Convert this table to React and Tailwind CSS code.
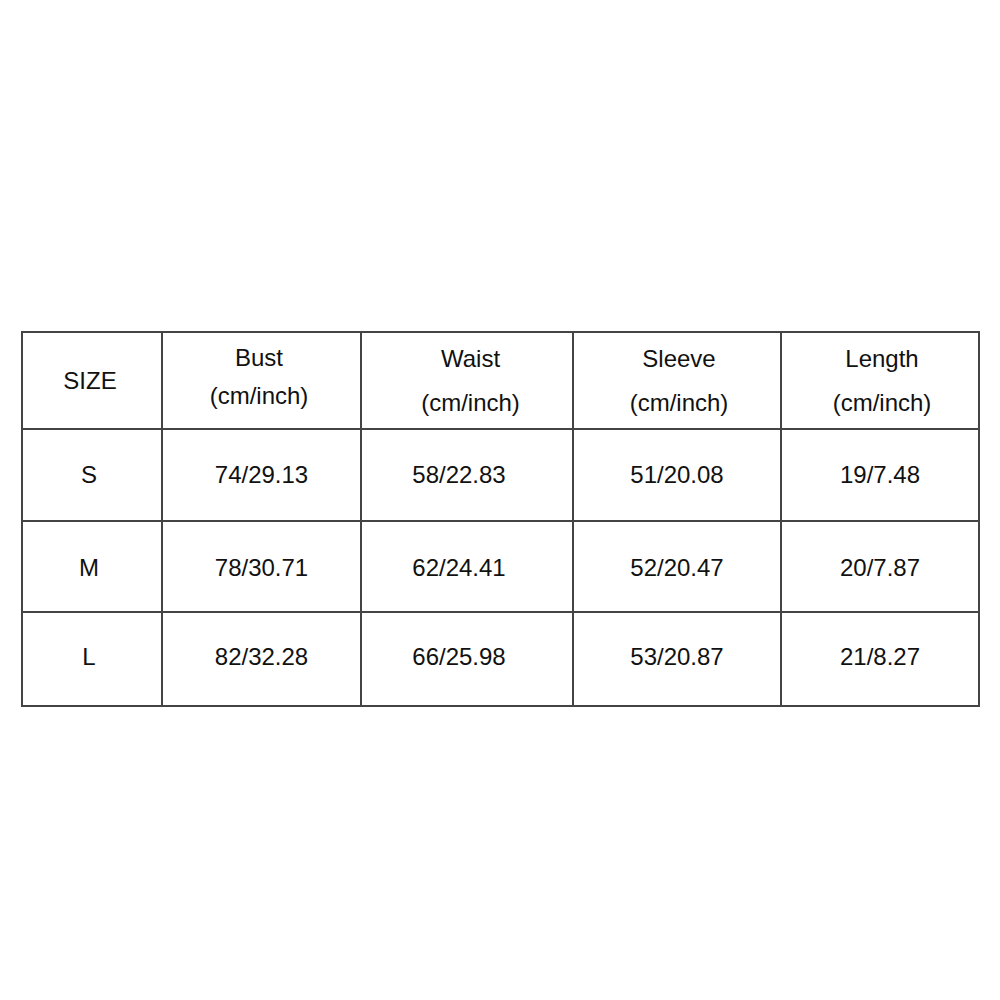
const rows = [
  { size: "S", bust: "74/29.13", waist: "58/22.83", sleeve: "51/20.08", length: "19/7.48", h: "h-[92px]", pad: "pt-0" },
  { size: "M", bust: "78/30.71", waist: "62/24.41", sleeve: "52/20.47", length: "20/7.87", h: "h-[91px]", pad: "pt-[3px]" },
  { size: "L", bust: "82/32.28", waist: "66/25.98", sleeve: "53/20.87", length: "21/8.27", h: "h-[94px]", pad: "pb-[4px]" },
];

const cell = "flex items-center justify-center border-r-2 border-b-2 border-[#444]";

const App = () => {
  return (
    <div
      className="min-h-screen bg-white pt-[331px] pl-[21px] text-[24px] text-[#111]"
      style={{ fontFamily: '"Liberation Sans", Arial, sans-serif' }}
    >
      <div className="grid w-[959px] grid-cols-[140px_199px_212px_208px_198px] border-l-2 border-t-2 border-[#444]">
        {/* header */}
        <div className={`${cell} h-[97px] pr-[4px]`}>SIZE</div>
        <div className={`${cell} h-[97px] flex-col pr-[5px] pb-[8px] leading-[38px]`}>
          <span>Bust</span>
          <span>(cm/inch)</span>
        </div>
        <div className={`${cell} h-[97px] flex-col pl-[7px] leading-[44px]`}>
          <span>Waist</span>
          <span>(cm/inch)</span>
        </div>
        <div className={`${cell} h-[97px] flex-col pl-[4px] leading-[44px]`}>
          <span>Sleeve</span>
          <span>(cm/inch)</span>
        </div>
        <div className={`${cell} h-[97px] flex-col pl-[4px] leading-[44px]`}>
          <span>Length</span>
          <span>(cm/inch)</span>
        </div>

        {rows.map((r) => (
          <div key={r.size} className="contents">
            <div className={`${cell} ${r.h} ${r.pad} pr-[6px]`}>{r.size}</div>
            <div className={`${cell} ${r.h} ${r.pad}`}>{r.bust}</div>
            <div className={`${cell} ${r.h} ${r.pad} pr-[16px]`}>{r.waist}</div>
            <div className={`${cell} ${r.h} ${r.pad}`}>{r.sleeve}</div>
            <div className={`${cell} ${r.h} ${r.pad}`}>{r.length}</div>
          </div>
        ))}
      </div>
    </div>
  );
};

export default App;
